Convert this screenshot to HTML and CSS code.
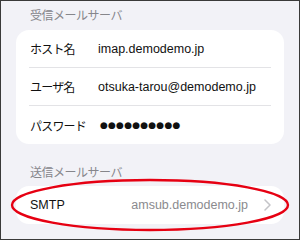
FILE: index.html
```html
<!DOCTYPE html>
<html lang="ja">
<head>
  <meta charset="UTF-8" />
  <meta name="viewport" content="width=device-width, initial-scale=1.0"/>
  <title>メールサーバ設定</title>
  <link rel="stylesheet" href="styles.css">
</head>
<body>
  <div class="screen">

    <!-- Incoming server -->
    <div class="section-title">受信メールサーバ</div>
    <div class="card">
      <div class="row">
        <span class="label">ホスト名</span>
        <span class="value">imap.demodemo.jp</span>
      </div>
      <div class="row">
        <span class="label">ユーザ名</span>
        <span class="value">otsuka-tarou@demodemo.jp</span>
      </div>
      <div class="row">
        <span class="label">パスワード</span>
        <span class="value dots">●●●●●●●●●●</span>
      </div>
    </div>

    <!-- Outgoing server -->
    <div class="section-title second">送信メールサーバ</div>
    <div class="card">
      <div class="row link">
        <span class="label">SMTP</span>
        <span class="detail">amsub.demodemo.jp</span>
        <svg class="chevron" width="7" height="12" viewBox="0 0 7 12">
          <path d="M1 1 L6 6 L1 11" fill="none" stroke="#c4c4c8" stroke-width="1.5" stroke-linecap="round" stroke-linejoin="round"/>
        </svg>
      </div>
    </div>

    <!-- Highlight mark -->
    <svg class="mark" width="300" height="240" viewBox="0 0 300 240">
      <ellipse cx="150" cy="205" rx="138" ry="25" fill="none" stroke="#e60012" stroke-width="2.4"/>
    </svg>
  </div>
</body>
</html>
```

FILE: styles.css
```css
html, body {
  margin: 0;
  padding: 0;
}

body {
  font-family: "Liberation Sans", "Noto Sans CJK JP", sans-serif;
  background: #f2f2f7;
}

.screen {
  position: relative;
  box-sizing: border-box;
  width: 300px;
  height: 240px;
  border: 1px solid #3a3a3a;
  padding: 7px 15px 0;
  overflow: hidden;
}

.section-title {
  padding: 0 14px 6px;
  font-size: 12px;
  line-height: 16px;
  letter-spacing: -0.5px;
  color: #86868b;
}

.section-title.second {
  margin-top: 21px;
  padding-bottom: 5px;
}

.card {
  background: #fff;
  border-radius: 13px;
  padding: 0 13px;
}

.row {
  display: flex;
  align-items: center;
  height: 38px;
  padding-left: 1px;
  border-bottom: 1px solid #e3e3e6;
  box-sizing: border-box;
  font-size: 12.5px;
  color: #111;
}

.row:last-child {
  border-bottom: none;
}

.label {
  width: 68px;
  flex-shrink: 0;
  font-size: 12px;
  letter-spacing: -0.8px;
}

.link .label {
  font-size: 12.5px;
  letter-spacing: 0;
}

.value {
  white-space: nowrap;
}

.dots {
  margin-left: 2px;
  font-family: "DejaVu Sans", sans-serif;
  font-size: 9px;
  letter-spacing: 0.2px;
}

.link .detail {
  margin-left: auto;
  color: #8a8a8e;
}

.chevron {
  margin-left: 16px;
  margin-right: 0;
}

.mark {
  position: absolute;
  top: -1px;
  left: -1px;
  pointer-events: none;
}
```
